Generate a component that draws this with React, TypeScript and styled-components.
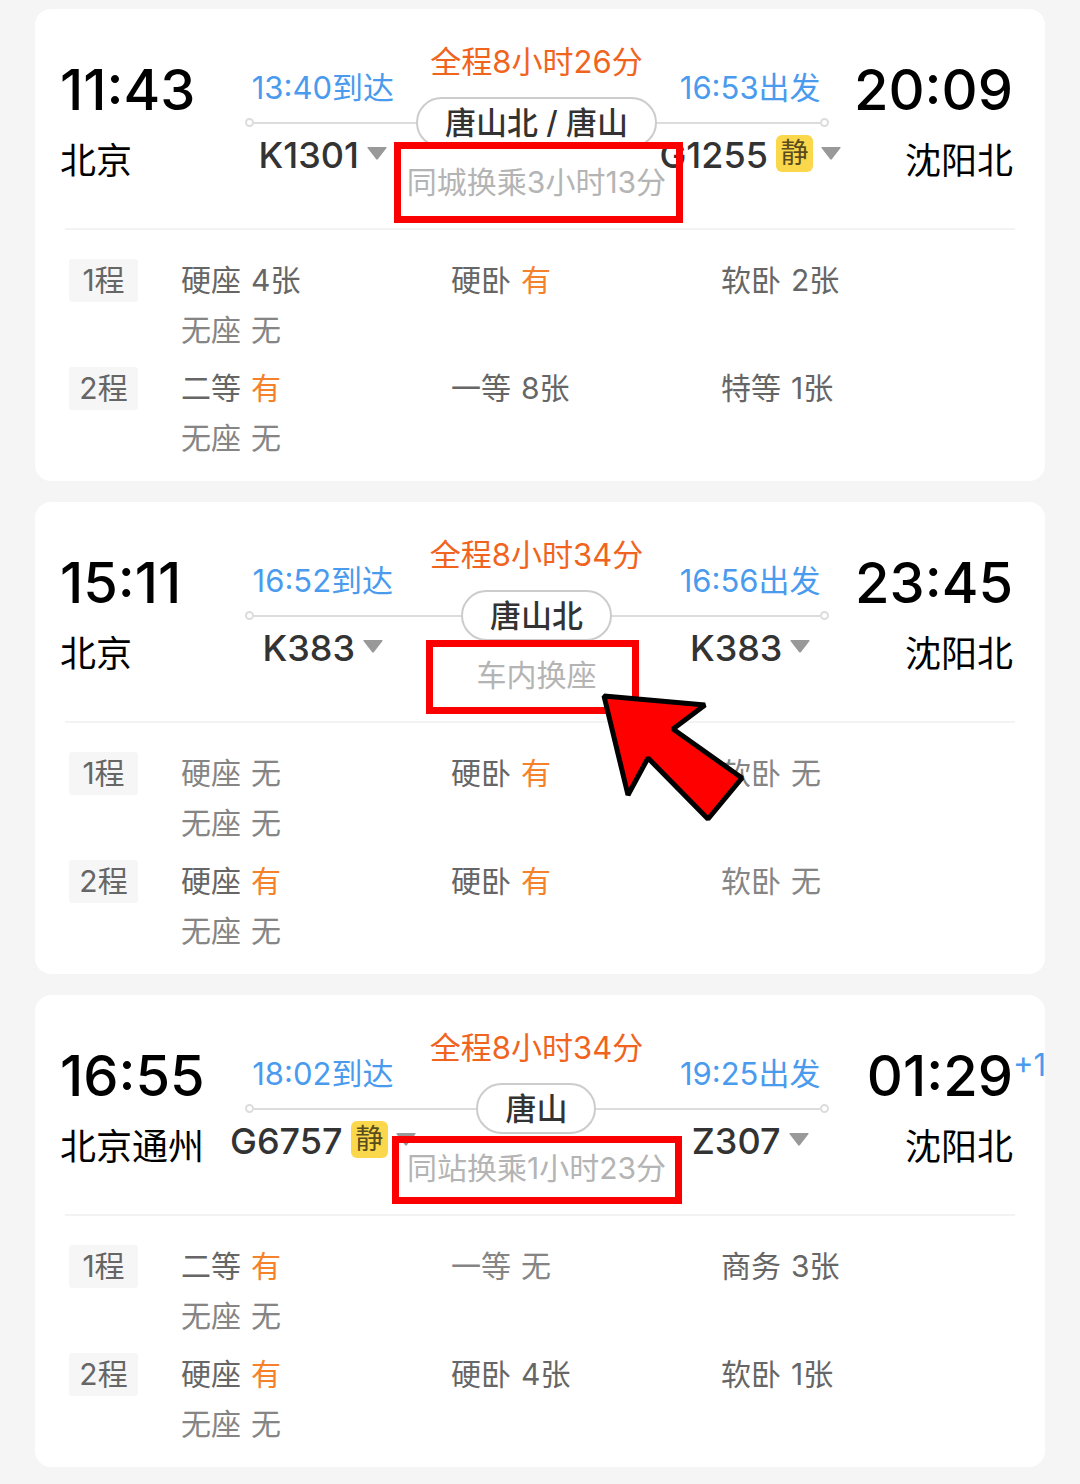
import React from "react";
import styled, { createGlobalStyle } from "styled-components";

const GlobalStyle = createGlobalStyle`
  *, *::before, *::after { box-sizing: border-box; }
  body {
    margin: 0;
    background: #f5f5f5;
    color: #000;
    font-family: Inter, "Noto Sans CJK SC", sans-serif;
  }
  ul, p { margin: 0; padding: 0; list-style: none; }
`;

const Page = styled.main`
  display: flex;
  flex-direction: column;
  gap: 21px;
  padding: 9px 35px 17px;
`;

const Card = styled.article`
  background: #fff;
  border-radius: 16px;
`;

const Header = styled.header`
  display: grid;
  grid-template-columns: 156px minmax(0, 1fr) 156px;
  height: 219px;
  padding: 0 32px 0 25px;
`;

const Terminal = styled.div<{ $end?: boolean }>`
  display: flex;
  flex-direction: column;
  align-items: ${(p) => (p.$end ? "flex-end" : "flex-start")};
  gap: 17px;
  padding-top: 49px;
  white-space: nowrap;
`;

const Clock = styled.time`
  position: relative;
  font-size: 56px;
  font-weight: 500;
  line-height: 64px;
`;

const DayOffset = styled.sup`
  position: absolute;
  left: 100%;
  top: 3px;
  color: #4a9bee;
  font-size: 31px;
  font-weight: 400;
  line-height: 36px;
`;

const Station = styled.span`
  font-size: 36px;
  line-height: 44px;
`;

const Route = styled.div`
  display: grid;
  grid-template-columns: repeat(3, minmax(0, 1fr));
  white-space: nowrap;
`;

const Rail = styled.div`
  grid-area: 1 / 1 / 2 / 4;
  display: flex;
  align-items: center;
  height: 9px;
  margin: 109px 28px 0 29px;
`;

const RailDot = styled.span`
  width: 9px;
  height: 9px;
  border: 2px solid #dcdcdc;
  border-radius: 50%;
`;

const RailLine = styled.span`
  flex: 1;
  height: 2px;
  background: #dcdcdc;
`;

const Leg = styled.div<{ $column: number }>`
  grid-area: 1 / ${(p) => p.$column};
  display: flex;
  flex-direction: column;
  align-items: center;
  gap: 27px;
  padding-top: 61px;
`;

const LegTime = styled.span`
  color: #4a9bee;
  font-size: 31px;
  line-height: 36px;
`;

const TrainButton = styled.button`
  display: flex;
  align-items: center;
  gap: 8px;
  height: 44px;
  padding: 0;
  border: 0;
  background: none;
  color: #333;
  font: inherit;
  font-size: 36px;
  font-weight: 500;
  line-height: 44px;

  > * { margin-bottom: 4px; }
`;

const QuietBadge = styled.span`
  width: 37px;
  height: 37px;
  border-radius: 6px;
  background: #fbd84b;
  color: #5a4c1c;
  font-size: 28px;
  font-weight: 400;
  line-height: 36px;
  text-align: center;
`;

const Hub = styled.div`
  position: relative;
  grid-area: 1 / 2;
  display: flex;
  flex-direction: column;
  align-items: center;
  padding-top: 35px;
`;

const Duration = styled.span`
  color: #f0641e;
  font-size: 31px;
  line-height: 36px;
`;

const Pill = styled.span`
  height: 51px;
  margin: 17px 0 16px;
  padding: 0 27px;
  border: 2px solid #ccc;
  border-radius: 26px;
  background: #fff;
  color: #333;
  font-size: 31px;
  font-weight: 500;
  line-height: 48px;
`;

const Transfer = styled.span`
  color: #b4b4b4;
  font-size: 30px;
  line-height: 36px;
`;

const Highlight = styled.div<{ $top: number; $shift: number; $width: number; $height: number }>`
  position: absolute;
  z-index: 1;
  top: ${(p) => p.$top}px;
  left: calc(50% - ${(p) => p.$shift}px);
  width: ${(p) => p.$width}px;
  height: ${(p) => p.$height}px;
  border: 7px solid #fb0000;
`;

const Pointer = styled.svg`
  position: absolute;
  z-index: 2;
  top: 188px;
  left: calc(50% + 63px);
  width: 148px;
  height: 134px;
`;

const Divider = styled.hr`
  height: 2px;
  margin: 0 30px;
  border: 0;
  background: #f3f3f3;
`;

const Legs = styled.div`
  display: flex;
  flex-direction: column;
  gap: 8px;
  padding: 25px 54px 18px 34px;
`;

const SeatRow = styled.section`
  display: flex;
  align-items: flex-start;
  gap: 43px;
`;

const LegTag = styled.span`
  flex: none;
  width: 69px;
  margin-top: 4px;
  border-radius: 3px;
  background: #f6f6f6;
  color: #666;
  font-size: 30px;
  line-height: 43px;
  text-align: center;
`;

const SeatList = styled.ul`
  flex: 1;
  display: grid;
  grid-template-columns: repeat(3, minmax(0, 1fr));
`;

const Seat = styled.li<{ $soldOut: boolean }>`
  display: flex;
  gap: 10px;
  color: ${(p) => (p.$soldOut ? "#858585" : "#666")};
  font-size: 30px;
  line-height: 50px;
  white-space: nowrap;
`;

const Available = styled.span`
  color: #f5812b;
`;

type Train = { time: string; number: string; quiet?: boolean };
type Trip = {
  depart: string;
  from: string;
  arrive: string;
  to: string;
  dayOffset?: string;
  duration: string;
  hub: string;
  transfer: string;
  first: Train;
  second: Train;
  highlight: { top: number; shift: number; width: number; height: number };
  pointer?: boolean;
  seats: [string, string][][];
};

const trips: Trip[] = [
  {
    depart: "11:43",
    from: "北京",
    arrive: "20:09",
    to: "沈阳北",
    duration: "全程8小时26分",
    hub: "唐山北 / 唐山",
    transfer: "同城换乘3小时13分",
    first: { time: "13:40到达", number: "K1301" },
    second: { time: "16:53出发", number: "G1255", quiet: true },
    highlight: { top: 133, shift: 143, width: 289, height: 81 },
    seats: [
      [["硬座", "4张"], ["硬卧", "有"], ["软卧", "2张"], ["无座", "无"]],
      [["二等", "有"], ["一等", "8张"], ["特等", "1张"], ["无座", "无"]],
    ],
  },
  {
    depart: "15:11",
    from: "北京",
    arrive: "23:45",
    to: "沈阳北",
    duration: "全程8小时34分",
    hub: "唐山北",
    transfer: "车内换座",
    first: { time: "16:52到达", number: "K383" },
    second: { time: "16:56出发", number: "K383" },
    highlight: { top: 138, shift: 111, width: 213, height: 74 },
    pointer: true,
    seats: [
      [["硬座", "无"], ["硬卧", "有"], ["软卧", "无"], ["无座", "无"]],
      [["硬座", "有"], ["硬卧", "有"], ["软卧", "无"], ["无座", "无"]],
    ],
  },
  {
    depart: "16:55",
    from: "北京通州",
    arrive: "01:29",
    to: "沈阳北",
    dayOffset: "+1",
    duration: "全程8小时34分",
    hub: "唐山",
    transfer: "同站换乘1小时23分",
    first: { time: "18:02到达", number: "G6757", quiet: true },
    second: { time: "19:25出发", number: "Z307" },
    highlight: { top: 141, shift: 145, width: 290, height: 68 },
    seats: [
      [["二等", "有"], ["一等", "无"], ["商务", "3张"], ["无座", "无"]],
      [["硬座", "有"], ["硬卧", "4张"], ["软卧", "1张"], ["无座", "无"]],
    ],
  },
];

function TrainLeg({ train, column }: { train: Train; column: number }) {
  return (
    <Leg $column={column}>
      <LegTime>{train.time}</LegTime>
      <TrainButton type="button">
        {train.number}
        {train.quiet && <QuietBadge>静</QuietBadge>}
        <svg width="20" height="13" viewBox="0 0 20 13" aria-hidden="true">
          <path d="M1 0h18q1 0 .5 1L11 12q-1 1.400-2 0L.5 1Q0 0 1 0z" fill="#999" />
        </svg>
      </TrainButton>
    </Leg>
  );
}

function TripCard({ trip }: { trip: Trip }) {
  const { highlight } = trip;
  return (
    <Card>
      <Header>
        <Terminal>
          <Clock>{trip.depart}</Clock>
          <Station>{trip.from}</Station>
        </Terminal>
        <Route>
          <Rail>
            <RailDot />
            <RailLine />
            <RailDot />
          </Rail>
          <TrainLeg train={trip.first} column={1} />
          <TrainLeg train={trip.second} column={3} />
          <Hub>
            <Duration>{trip.duration}</Duration>
            <Pill>{trip.hub}</Pill>
            <Transfer>{trip.transfer}</Transfer>
            <Highlight
              $top={highlight.top}
              $shift={highlight.shift}
              $width={highlight.width}
              $height={highlight.height}
            />
            {trip.pointer && (
              <Pointer viewBox="0 0 148 134" aria-hidden="true">
                <path
                  d="M5 6L106 15L74 39L143 88L109 129L49 68L29 105Z"
                  fill="#f00"
                  stroke="#000"
                  strokeWidth="5"
                  strokeLinejoin="bevel"
                />
              </Pointer>
            )}
          </Hub>
        </Route>
        <Terminal $end>
          <Clock>
            {trip.arrive}
            {trip.dayOffset && <DayOffset>{trip.dayOffset}</DayOffset>}
          </Clock>
          <Station>{trip.to}</Station>
        </Terminal>
      </Header>
      <Divider />
      <Legs>
        {trip.seats.map((seats, index) => (
          <SeatRow key={index}>
            <LegTag>{index + 1}程</LegTag>
            <SeatList>
              {seats.map(([kind, left]) => (
                <Seat key={kind} $soldOut={left === "无"}>
                  <span>{kind}</span>
                  {left === "有" ? <Available>{left}</Available> : <span>{left}</span>}
                </Seat>
              ))}
            </SeatList>
          </SeatRow>
        ))}
      </Legs>
    </Card>
  );
}

export default function App() {
  return (
    <>
      <GlobalStyle />
      <Page>
        {trips.map((trip) => (
          <TripCard key={trip.depart} trip={trip} />
        ))}
      </Page>
    </>
  );
}
